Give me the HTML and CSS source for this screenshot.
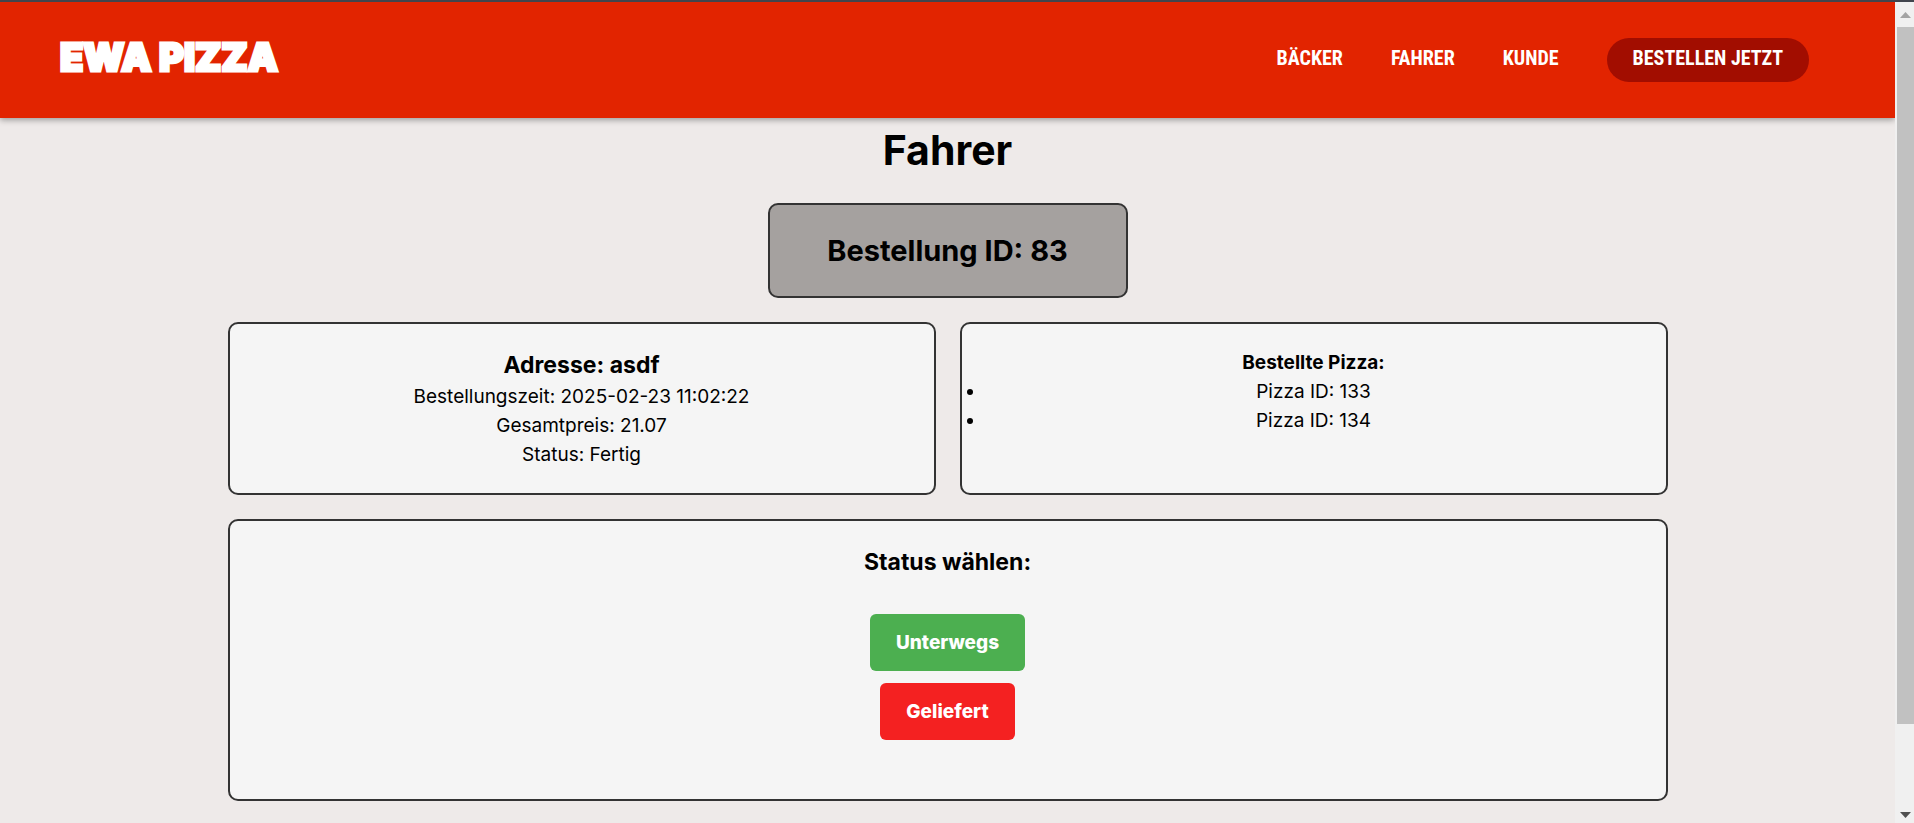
FILE: index.html
```html
<!DOCTYPE html>
<html lang="de">
<head>
<meta charset="utf-8">
<title>Fahrer</title>
<link rel="stylesheet" href="styles.css">
</head>
<body>
<div class="page">
  <header class="header">
    <a class="logo" href="#">EWA PIZZA</a>
    <nav class="nav">
      <a href="#">BÄCKER</a>
      <a href="#">FAHRER</a>
      <a href="#">KUNDE</a>
      <a class="order" href="#">BESTELLEN JETZT</a>
    </nav>
  </header>
  <main class="main">
    <h1>Fahrer</h1>
    <h2 class="card order-id">Bestellung ID: 83</h2>
    <div class="details">
      <section class="card">
        <h3>Adresse: asdf</h3>
        <p>Bestellungszeit: 2025-02-23 11:02:22</p>
        <p>Gesamtpreis: 21.07</p>
        <p>Status: Fertig</p>
      </section>
      <section class="card">
        <h4>Bestellte Pizza:</h4>
        <ul>
          <li>Pizza ID: 133</li>
          <li>Pizza ID: 134</li>
        </ul>
      </section>
    </div>
    <section class="card status">
      <h3>Status wählen:</h3>
      <form class="actions">
        <button class="button" type="button">Unterwegs</button>
        <button class="button delivered" type="button">Geliefert</button>
      </form>
    </section>
  </main>
</div>
<div class="scrollbar" aria-hidden="true">
  <svg class="arrow" width="11" height="6" viewBox="0 0 11 6"><path d="M0 6L5.500 0L11 6Z" fill="#a3a3a3"/></svg>
  <div class="thumb"></div>
  <svg class="arrow" width="11" height="6" viewBox="0 0 11 6"><path d="M0 0L5.500 6L11 0Z" fill="#505050"/></svg>
</div>
</body>
</html>
```
FILE: styles.css
```css
* { box-sizing: border-box; margin: 0; padding: 0; }

body {
  display: grid;
  grid-template-columns: minmax(0, 1fr) 19px;
  min-height: 100vh;
  border-top: 2px solid #41454d;
  background: #eeeae9;
  color: #000;
  font-family: Inter, "Noto Sans", sans-serif;
  font-size: 19px;
  line-height: 29px;
}

.header {
  display: flex;
  justify-content: space-between;
  align-items: center;
  height: 116px;
  padding: 0 86px 0 60px;
  background: #e22400;
  box-shadow: 0 2px 6px rgba(0, 0, 0, 0.35);
}

.header a { color: #fff; text-decoration: none; }

.logo {
  padding-bottom: 6px;
  font-size: 38px;
  font-weight: 900;
  line-height: 40px;
  -webkit-text-stroke: 3px #fff;
}

.nav {
  display: flex;
  align-items: center;
  gap: 48px;
  font-family: "Liberation Sans Narrow", "Roboto Condensed", "Liberation Sans", sans-serif;
  font-size: 20px;
  font-weight: 700;
  line-height: 40px;
}

.nav a { padding-bottom: 4px; }

.nav .order {
  padding: 0 26px 4px;
  border-radius: 22px;
  background: #a20d00;
}

.main {
  display: flex;
  flex-direction: column;
  gap: 24px;
  width: 76%;
  max-width: 1440px;
  margin: 0 auto;
  text-align: center;
}

h1 {
  padding-top: 4px;
  font-size: 41px;
  line-height: 57px;
}

h3 { font-size: 23px; line-height: 34px; }

h4 { font-size: 19px; }

.card {
  padding: 24px;
  border: 2px solid #333;
  border-radius: 10px;
  background: #f5f5f5;
}

.order-id {
  align-self: center;
  width: 25%;
  background: #a5a19f;
  font-size: 29px;
  line-height: 43px;
}

.details {
  display: grid;
  grid-template-columns: 1fr 1fr;
  gap: 24px;
}

.status { margin-bottom: 22px; }

.actions {
  display: flex;
  flex-direction: column;
  align-items: center;
  gap: 12px;
  padding: 35px 0;
}

.button {
  padding: 14px 26px;
  border: 0;
  border-radius: 6px;
  background: #4caf50;
  color: #fff;
  font: inherit;
  font-weight: 800;
}

.delivered { background: #f42121; }

.scrollbar {
  display: flex;
  flex-direction: column;
  align-items: center;
  padding: 10px 0 5px 2px;
  background: #f0f0f0;
}

.arrow { flex: none; }

.thumb {
  width: 100%;
  height: calc(100% - 109px);
  margin: 9px 0 auto;
  background: #c1c1c1;
}
```
